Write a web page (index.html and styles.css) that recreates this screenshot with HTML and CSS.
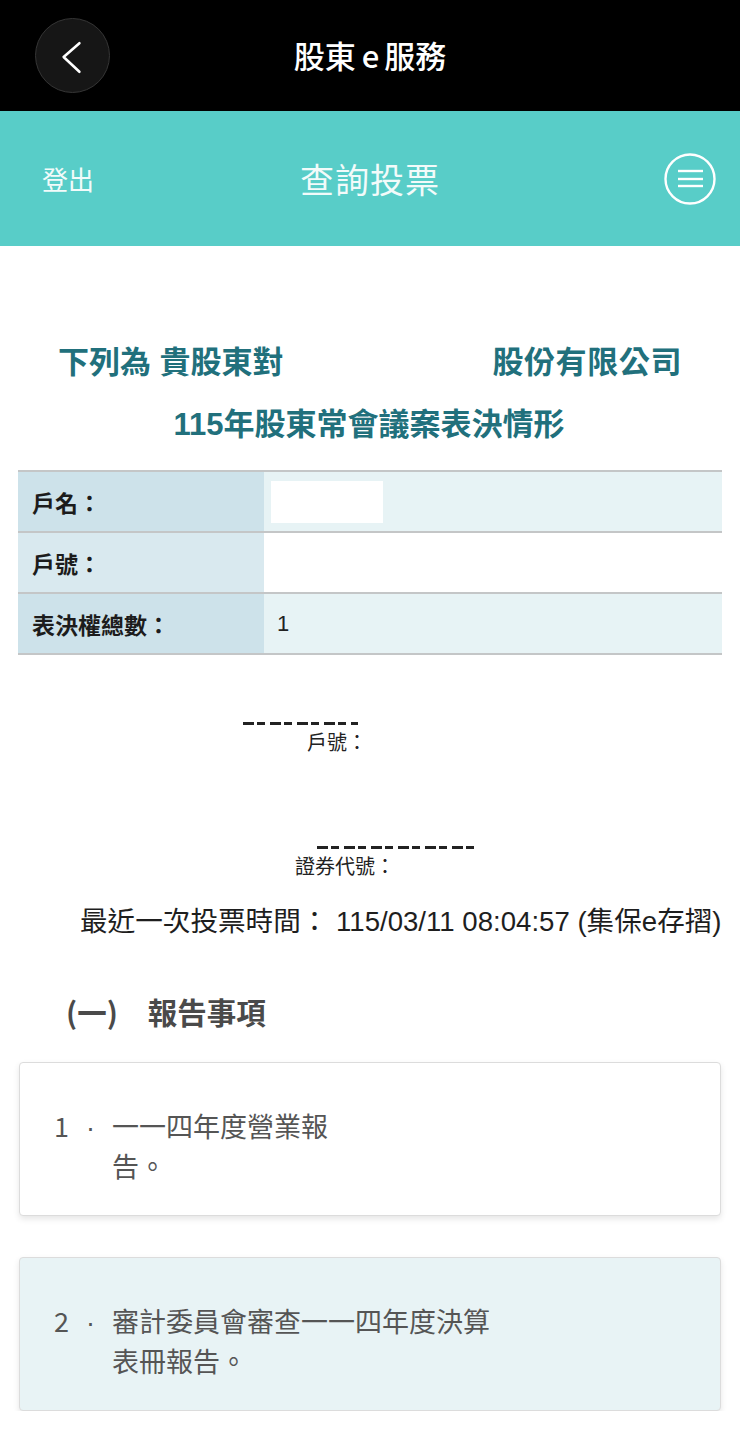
FILE: index.html
```html
<!DOCTYPE html>
<html>
  <head>
    <meta charset="utf-8">
    <title>股東e服務 - 查詢投票</title>
    <link rel="stylesheet" href="styles.css">
  </head>
  <body>
    <!-- app header -->
    <div class="topbar">
      <div class="topbar-left">
        <button class="back-btn" aria-label="返回">
          <svg width="74" height="74" viewBox="0 0 74 74">
            <polyline points="44,24 28,38 44,53" fill="none" stroke="#fff" stroke-width="2.6" stroke-linecap="round" stroke-linejoin="round"/>
          </svg>
        </button>
      </div>
      <div class="topbar-title">股東<span class="e">e</span>服務</div>
      <div></div>
    </div>

    <!-- page header -->
    <div class="subbar">
      <div class="subbar-left">登出</div>
      <div class="subbar-title">查詢投票</div>
      <div class="subbar-right">
        <svg width="52" height="52" viewBox="0 0 52 52">
          <circle cx="26" cy="26" r="24.5" fill="none" stroke="#fff" stroke-width="2.4"/>
          <line x1="14" y1="18" x2="39" y2="18" stroke="#fff" stroke-width="2.4"/>
          <line x1="14" y1="26" x2="39" y2="26" stroke="#fff" stroke-width="2.4"/>
          <line x1="14" y1="33" x2="39" y2="33" stroke="#fff" stroke-width="2.4"/>
        </svg>
      </div>
    </div>

    <div class="content">
      <div class="heading-row">
        <span>下列為 貴股東對</span>
        <span>股份有限公司</span>
      </div>
      <div class="heading-center">115年股東常會議案表決情形</div>

      <div class="info-table">
        <div class="info-row alt">
          <div class="info-label">戶名：</div>
          <div class="info-value"><span class="mask"></span></div>
        </div>
        <div class="info-row">
          <div class="info-label">戶號：</div>
          <div class="info-value"></div>
        </div>
        <div class="info-row alt">
          <div class="info-label">表決權總數：</div>
          <div class="info-value">1</div>
        </div>
      </div>

      <!-- clipped lines left over from the masked block -->
      <div class="fragment first">
        <div class="dashes short"></div>
        <div class="fragment-label">戶號：</div>
      </div>
      <div class="fragment second">
        <div class="dashes long"></div>
        <div class="fragment-label">證券代號：</div>
      </div>

      <div class="vote-time">最近一次投票時間： 115/03/11 08:04:57 (集保e存摺)</div>

      <div class="section-title"><span class="paren">(一)</span>報告事項</div>

      <div class="item-card">
        <div class="item-num">1<span class="dot">·</span></div>
        <div class="item-text">一一四年度營業報<br>告。</div>
      </div>
      <div class="item-card shaded">
        <div class="item-num">2<span class="dot">·</span></div>
        <div class="item-text">審計委員會審查一一四年度決算<br>表冊報告。</div>
      </div>
    </div>
  </body>
</html>
```
FILE: styles.css
```css
body {
  margin: 0;
  background: #fff;
  font-family: "Liberation Sans", "Noto Sans CJK TC", sans-serif;
  color: #222;
}

/* app header */
.topbar {
  height: 111px;
  background: #000;
  display: grid;
  grid-template-columns: 1fr auto 1fr;
  align-items: center;
}
.topbar-left {
  padding-left: 35px;
}
.back-btn {
  width: 75px;
  height: 75px;
  padding: 0;
  border-radius: 50%;
  background: #161616;
  border: 1px solid #353535;
  display: flex;
  align-items: center;
  justify-content: center;
}
.topbar-title {
  font-family: "Noto Sans CJK TC", sans-serif;
  font-size: 31px;
  font-weight: 500;
  color: #fff;
  margin-top: -2px;
}
.topbar-title .e {
  margin: 0 5px 0 6px;
}

/* page header */
.subbar {
  height: 135px;
  background: #58cdc8;
  display: grid;
  grid-template-columns: 1fr auto 1fr;
  align-items: center;
  font-family: "Noto Sans CJK TC", sans-serif;
  color: #f2fbfa;
}
.subbar-left {
  padding-left: 42px;
  font-size: 26px;
}
.subbar-title {
  font-size: 34px;
  letter-spacing: 1px;
}
.subbar-right {
  justify-self: end;
  margin-right: 24px;
  height: 52px;
}

/* headings */
.heading-row {
  margin-top: 97px;
  padding: 0 58px;
  display: flex;
  justify-content: space-between;
  font-size: 31px;
  line-height: 40px;
  font-weight: bold;
  color: #21707c;
}
.heading-row span:last-child {
  letter-spacing: 0.6px;
}
.heading-center {
  margin-top: 22px;
  text-align: center;
  font-size: 31px;
  line-height: 40px;
  font-weight: bold;
  color: #21707c;
  padding-right: 2px;
}

/* shareholder table */
.info-table {
  margin: 25px 18px 0;
  border-top: 2px solid #c4c6c7;
}
.info-row {
  display: flex;
  height: 59px;
  border-bottom: 2px solid #c4c6c7;
  font-size: 22px;
}
.info-label {
  width: 232px;
  padding-left: 14px;
  display: flex;
  align-items: center;
  font-size: 23px;
  font-weight: bold;
  background: #d9e9ef;
  color: #1c1c1c;
}
.info-row.alt .info-label {
  background: #cde2ea;
}
.info-value {
  flex: 1;
  padding-left: 13px;
  display: flex;
  align-items: center;
  background: #fff;
}
.info-row.alt .info-value {
  background: #e7f3f5;
}
.mask {
  width: 112px;
  height: 42px;
  margin-left: -6px;
  background: #fff;
}

/* leftovers of the masked block */
.fragment-label {
  font-size: 20px;
  line-height: 28px;
  color: #222;
}
.fragment.first {
  margin-top: 67px;
}
.fragment.second {
  margin-top: 89px;
}
.fragment.first .fragment-label {
  padding-left: 307px;
  margin-top: 4px;
}
.fragment.second .fragment-label {
  padding-left: 295px;
  margin-top: 4px;
}
.dashes {
  height: 3px;
  background: repeating-linear-gradient(90deg, #222 0 11px, transparent 11px 14px, #222 14px 22px, transparent 22px 27px);
}
.dashes.short {
  width: 115px;
  margin-left: 243px;
}
.dashes.long {
  width: 160px;
  margin-left: 317px;
}

.vote-time {
  margin-top: 23px;
  padding-left: 80px;
  font-size: 27.6px;
  line-height: 36px;
  color: #1e1e1e;
  white-space: nowrap;
}

.section-title {
  margin-top: 51px;
  padding-left: 66px;
  font-family: "Noto Sans CJK TC", sans-serif;
  font-size: 29.5px;
  line-height: 40px;
  font-weight: bold;
  color: #4a4a4a;
}
.section-title .paren {
  margin-right: 30px;
}

/* agenda cards */
.item-card {
  margin: 31px 19px 0;
  padding: 43px 20px 29px 34px;
  min-height: 80px;
  display: flex;
  background: #fff;
  border: 1px solid #dcdcdc;
  border-radius: 4px;
  box-shadow: 0 3px 6px rgba(0, 0, 0, 0.1);
  font-family: "Noto Sans CJK TC", sans-serif;
  font-size: 27px;
  line-height: 40px;
  color: #555;
}
.item-card.shaded {
  margin-top: 41px;
  background: #e8f3f5;
}
.item-num {
  width: 58px;
  flex: none;
}
.item-num .dot {
  font-family: "Liberation Sans", sans-serif;
  margin-left: 17px;
}
```
